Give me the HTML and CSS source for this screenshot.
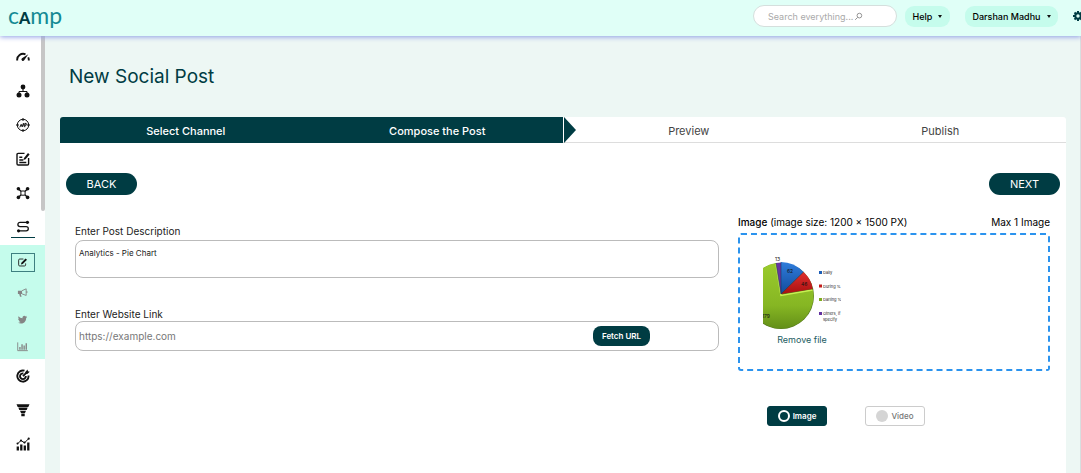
FILE: index.html
```html
<!DOCTYPE html>
<html lang="en">
<head>
<meta charset="utf-8">
<title>New Social Post</title>
<link rel="stylesheet" href="styles.css">
</head>
<body>
<header class="topbar">
  <a class="logo" href="#"><span>c</span><b>A</b><span>mp</span></a>
  <div class="tools">
    <label class="search">
      <input type="text" aria-label="Search" placeholder="Search everything...">
      <svg class="lens" viewBox="0 0 10 10"><circle cx="6" cy="4" r="2.6"/><path d="M4 6 1.3 8.7"/></svg>
    </label>
    <button class="pill help" type="button">Help <i class="caret"></i></button>
    <button class="pill user" type="button">Darshan Madhu <i class="caret"></i></button>
    <button class="gear" type="button" aria-label="Settings"><svg viewBox="0 0 10 10"><circle class="ring" cx="5" cy="5" r="2.7"/><path d="M5 0v2M5 8v2M0 5h2M8 5h2M1.5 1.5l1.4 1.4M7.1 7.1l1.4 1.4M8.5 1.5 7.1 2.9M2.9 7.1 1.5 8.5"/></svg></button>
  </div>
</header>
<div class="shell">
  <nav class="side" aria-label="Main">
    <a class="item" href="#" aria-label="Dashboard"><svg viewBox="0 0 14 14"><path class="thick" d="M1.2 10.5A6 6 0 0 1 9.5 4.3M12.2 7.3a6 6 0 0 1 .6 3.2"/><path class="fill" d="M12.3 4.2 8.2 10.3a1.5 1.5 0 1 1-2.2-2z"/></svg></a>
    <a class="item" href="#" aria-label="Organisation"><svg viewBox="0 0 14 14"><path d="M7 3v5M3 10V7.5h8V10"/><circle class="fill" cx="7" cy="3" r="2.4"/><circle class="fill" cx="3" cy="11" r="2.5"/><circle class="fill" cx="11" cy="11" r="2.5"/></svg></a>
    <a class="item" href="#" aria-label="Audience"><svg viewBox="0 0 14 14"><circle cx="7" cy="7" r="5.7"/><path d="M7 0v3M7 11v3M0 7h3M11 7h3M3.8 9.3l1.4-3 1 2.6 1.2-3.6.8 3.4M8.8 9.2V5.4h1.4v1.8H8.8"/></svg></a>
    <a class="item" href="#" aria-label="Content"><svg viewBox="0 0 14 14"><path class="mid" d="M8.5 1.4H2.2Q1 1.4 1 2.6v9.2Q1 13 2.2 13h9.2q1.2 0 1.2-1.2V6"/><path class="mid" d="M3.3 5.3h3M3.3 8h4M3.3 10.5h7"/><path class="fill" d="m8 6 4-5 1.6 1.4-4 4.8L7.4 8z"/></svg></a>
    <a class="item" href="#" aria-label="Network"><svg viewBox="0 0 14 14"><path class="mid" d="m2.5 3 9 8.3M11.5 3l-9 8.3"/><rect class="hollow" x="4.9" y="5" width="4.2" height="4.2" rx="1"/><circle class="fill" cx="2.4" cy="2.8" r="1.8"/><circle class="fill" cx="11.6" cy="2.8" r="1.8"/><circle class="fill" cx="2.4" cy="11.4" r="1.8"/><circle class="fill" cx="11.6" cy="11.4" r="1.8"/></svg></a>
    <a class="item current" href="#" aria-label="Journeys"><svg viewBox="0 0 14 14"><path class="mid" d="M11.5 2.5H3.8a2.3 2.3 0 0 0 0 4.6h6.6a2.3 2.3 0 0 1 0 4.6H2.5"/><circle class="fill" cx="11.8" cy="2.5" r="1.7"/><circle class="fill" cx="2.2" cy="11.7" r="1.7"/></svg></a>
    <div class="sub">
      <a class="subitem boxed" href="#" aria-label="Compose"><svg viewBox="0 0 12 12"><path d="M7 2.2H3Q1.8 2.2 1.8 3.4v5.2Q1.8 9.8 3 9.8h5.2q1.2 0 1.2-1.2V7"/><path class="fill" d="m4.8 6.2 4.5-4.6 1.6 1.5-4.6 4.6-2 .5z"/></svg></a>
      <a class="subitem" href="#" aria-label="Campaigns"><svg viewBox="0 0 12 12"><path class="fill" d="M1 4h4.5v3.5H4.2l.8 3H3.3l-.9-3H1z"/><path d="M5.500 4 10 2v7.200L5.500 7.500M10.800 4.500v2"/></svg></a>
      <a class="subitem" href="#" aria-label="Twitter"><svg viewBox="0 0 12 12"><path class="fill" d="M11 3.2 10 4.3C10 8.500 6.800 10.500 4.300 10.300 3 10.300 2 10 1.200 9.500c1.200 0 2-.3 2.700-.9-1 0-1.600-.6-1.900-1.400h.8C1.700 6.800 1.300 6 1.300 5.100l.9.200C1.200 4.500 1.200 3.300 1.700 2.400 2.800 3.700 4.200 4.500 6 4.600 5.700 3.100 6.700 2 8 2c.6 0 1.100.3 1.500.6L10.800 2l-.7 1.200z"/></svg></a>
      <a class="subitem" href="#" aria-label="Reports"><svg viewBox="0 0 12 12"><path d="M.8 1.500v9h11"/><path class="bars" d="M3.200 9.500V6.500M5.500 9.500V3.500M7.800 9.500V5M10.100 9.500V2.500"/></svg></a>
    </div>
    <a class="item" href="#" aria-label="Goals"><svg viewBox="0 0 14 14"><path class="thick" d="M8.500 1.700A5.600 5.600 0 1 0 12.500 6.500"/><path class="thick" d="M7.400 4.400a2.900 2.900 0 1 0 2.400 2.600"/><path class="thick" d="m7 7.200 3.500-3.500"/><path class="fill" d="m9.300 3 2.200-2.500.5 1.800 1.800.5-2.500 2.200-2 .1z"/></svg></a>
    <a class="item" href="#" aria-label="Funnel"><svg viewBox="0 0 14 14"><path class="fill" d="M.5 1.200h13L12.300 4H1.700zM2.300 4.600h9.400l-1 2.500H3.300zM4 7.700h6L9 10H5zM5.300 10.600h3.400v2.700H5.300z"/></svg></a>
    <a class="item" href="#" aria-label="Analytics"><svg viewBox="0 0 14 14"><path class="heavy" d="M1.800 13.500V9.500M5.300 13.500V7.500M8.800 13.500V8.500M12.300 13.500V5.500"/><path d="M1.500 6.800 5 3.500l3.500 2.300 4-4"/><circle class="fill" cx="1.500" cy="6.500" r="1"/><circle class="fill" cx="5" cy="3.500" r="1.100"/><circle class="fill" cx="8.500" cy="5.500" r="1.100"/><circle class="fill" cx="12.700" cy="1.700" r="1.100"/></svg></a>
  </nav>
  <main class="main">
    <h1 class="title">New Social Post</h1>
    <ol class="steps">
      <li class="step done">Select Channel</li>
      <li class="step done last">Compose the Post</li>
      <li class="step">Preview</li>
      <li class="step">Publish</li>
    </ol>
    <section class="card">
      <div class="nav-row">
        <button class="round" type="button">BACK</button>
        <button class="round" type="button">NEXT</button>
      </div>
      <form class="form">
        <div class="fields">
          <label class="label" for="desc">Enter Post Description</label>
          <textarea class="desc" id="desc">Analytics - Pie Chart</textarea>
          <label class="label" for="link">Enter Website Link</label>
          <div class="link">
            <input id="link" type="url" placeholder="https://example.com">
            <button class="fetch" type="button">Fetch URL</button>
          </div>
        </div>
        <div class="media">
          <div class="media-head"><span><b>Image</b> (image size: 1200 × 1500 PX)</span><span>Max 1 Image</span></div>
          <div class="drop">
            <figure class="preview">
              <svg class="pie" viewBox="0 0 78 76" role="img" aria-label="Pie chart">
                <defs>
                  <linearGradient id="green" x2="0" y2="1"><stop offset="0" stop-color="#9acb2d"/><stop offset=".65" stop-color="#86b623"/><stop offset="1" stop-color="#638f18"/></linearGradient>
                  <linearGradient id="blue" x2="0" y2="1"><stop offset="0" stop-color="#2f7ddc"/><stop offset="1" stop-color="#124b9c"/></linearGradient>
                  <linearGradient id="red" x2="0" y2="1"><stop offset="0" stop-color="#df3030"/><stop offset="1" stop-color="#a91010"/></linearGradient>
                </defs>
                <circle cx="18" cy="41" r="33" fill="#55771d"/>
                <path fill="url(#green)" d="M18 40 50 35A32.500 33 0 1 1 13 8z"/>
                <path class="shine" d="m13 9 5 31.500L49.500 35"/>
                <path fill="#6736a0" d="M18 39 13 8l5-.5z"/>
                <path fill="url(#blue)" d="M18 39V7q13 0 22.500 10z"/>
                <path fill="url(#red)" d="m18 39 22.500-22Q49 25 49.500 34z"/>
                <path class="edge" d="M18 39V7M18 39l22.500-22M18 39 13 8"/>
                <g class="values"><text x="12" y="6">13</text><text x="24" y="18">62</text><text x="38" y="31">46</text><text x="-1" y="63">179</text></g>
                <g><path fill="#1c5eb8" d="M56 16h3v3h-3z"/><path fill="#c21c1c" d="M56 29.500h3v3h-3z"/><path fill="#7eab20" d="M56 43h3v3h-3z"/><path fill="#6232a0" d="M56 57h3v3h-3z"/></g>
                <g class="legend"><text x="60" y="19">Daily</text><text x="60" y="32.500">During %</text><text x="60" y="46">Darling %</text><text x="60" y="60">Others, if</text><text x="60" y="65.500">specify</text></g>
              </svg>
              <button class="remove" type="button">Remove file</button>
            </figure>
          </div>
          <div class="kinds">
            <label class="kind"><input type="radio" name="kind" checked><span>Image</span></label>
            <label class="kind"><input type="radio" name="kind"><span>Video</span></label>
          </div>
        </div>
      </form>
    </section>
  </main>
</div>
</body>
</html>
```
FILE: styles.css
```css
* { box-sizing: border-box; }
html, body { height: 100%; }
body {
  margin: 0;
  display: flex;
  flex-direction: column;
  overflow: hidden;
  background: #edf7f4;
  color: #222;
  font-family: Inter, "Liberation Sans", sans-serif;
  font-size: 10px;
}
button, input, textarea { font: inherit; margin: 0; border: 0; }
button { padding: 0; cursor: pointer; }
a { text-decoration: none; color: inherit; }

.topbar {
  position: relative;
  z-index: 1;
  flex: none;
  height: 36px;
  display: flex;
  align-items: center;
  justify-content: space-between;
  padding: 0 0 4px 8px;
  background: #e0fff7;
  box-shadow: 0 1px 5px #8f9fe6;
}
.logo { display: flex; align-items: baseline; color: #148a94; font-family: Lato, sans-serif; font-size: 23px; line-height: 28px; }
.logo b { color: #003c43; font-size: 16px; font-weight: 900; }
.tools { display: flex; align-items: center; }
.search {
  width: 144px;
  height: 22px;
  display: flex;
  align-items: center;
  border: 1px solid #d5dfdd;
  border-radius: 11px;
  padding-left: 14px;
  background: #fff;
}
.search input { width: 86px; padding: 0; background: none; outline: 0; font-size: 9px; }
.search input::placeholder { color: #aaa; opacity: 1; }
.lens { width: 9px; height: 9px; fill: none; stroke: #888; }
.pill { height: 21px; display: flex; align-items: center; justify-content: center; gap: 6px; border-radius: 9px; background: #c5fcec; color: #000; font-size: 9px; font-weight: 500; }
.help { width: 45px; margin-left: 8px; }
.user { width: 93px; margin-left: 15px; }
.caret { border: 2px solid transparent; border-top: 3px solid #111; border-bottom: 0; }
.gear { width: 8px; height: 10px; margin-left: 15px; overflow: hidden; background: none; }
.gear svg { display: block; width: 10px; height: 10px; fill: none; stroke: #003c43; stroke-width: 2; }

.shell { flex: 1; min-height: 0; display: flex; }
.side { position: relative; flex: none; width: 45px; padding-top: 4px; background: #fff; }
.side::after { content: ""; position: absolute; top: 0; right: 0; width: 4px; height: 175px; background: #c6c6c6; border-radius: 0 0 2px 2px; }
.item { height: 34px; display: flex; align-items: center; justify-content: center; }
.item svg { width: 14px; height: 14px; }
.side svg { fill: none; stroke: #111; stroke-width: 1; }
.side .fill { fill: #111; stroke: none; }
.side .hollow { fill: #fff; }
.side .mid { stroke-width: 1.4; }
.side .thick { stroke-width: 1.9; }
.side .heavy { stroke-width: 2.3; }
.side .bars { stroke-width: 1.5; }
.current { width: 24px; height: 28px; margin: 0 auto; padding-top: 5px; border-bottom: 1px solid #003c43; }
.current svg { flex: none; height: 13px; }
.sub { height: 114px; margin-top: 7px; padding-top: 8px; background: #c5fcec; }
.subitem { height: 27px; display: flex; align-items: center; justify-content: center; }
.subitem svg { width: 11px; height: 11px; }
.side .subitem svg { stroke: #858585; }
.side .subitem .fill { fill: #858585; }
.sub .boxed { width: 24px; height: 19px; margin: 0 auto 7px; border: 1px solid #3e7f80; }
.side .boxed svg { stroke: #222; }
.side .boxed .fill { fill: #111; }

.main { flex: 1; min-width: 0; display: flex; flex-direction: column; padding: 0 14px 0 15px; border-right: 1px solid #d8dedf; }
.title { margin: 26px 0 25px 9px; color: #003c43; font-size: 19px; font-weight: 400; line-height: 30px; }
.steps { list-style: none; margin: 0; padding: 0; display: grid; grid-template-columns: repeat(4, 1fr); flex: none; height: 26px; border-bottom: 1px solid #ddd; border-radius: 3px 3px 0 0; background: #fff; }
.step { display: flex; align-items: center; justify-content: center; height: 26px; padding-top: 1px; color: #444; font-size: 11px; }
.done { background: #003c43; color: #fff; font-weight: 500; }
.done:first-child { border-radius: 3px 0 0 0; }
.last { position: relative; }
.last::after { content: ""; position: absolute; left: 100%; top: 0; border: 13px solid transparent; border-left: 12px solid #003c43; border-right: 0; margin-left: 1px; }
.card { flex: 1; background: #fff; padding: 30px 6px 0; }
.nav-row { display: flex; justify-content: space-between; }
.round { width: 71px; height: 22px; border-radius: 11px; background: #003c43; color: #fff; font-size: 11px; }
.form { display: grid; grid-template-columns: 644fr 312fr; column-gap: 19px; padding: 19px 10px 0 9px; }
.fields { display: flex; flex-direction: column; padding-top: 10px; }
.label { line-height: 14px; color: #222; }
.desc { display: block; width: 100%; height: 38px; margin: 2px 0 29px; padding: 6px 3px; border: 1px solid #bbb; border-radius: 8px; resize: none; background: #fff; color: #222; font-size: 8px; line-height: 12px; }
.link { display: flex; align-items: center; height: 30px; border: 1px solid #bbb; border-radius: 8px; padding: 0 68px 0 3px; }
.link input { flex: 1; min-width: 0; padding: 0; background: none; outline: 0; }
.link input::placeholder { color: #777; opacity: 1; }
.fetch { width: 57px; height: 20px; border-radius: 8px; background: #003c43; color: #fff; font-size: 8px; font-weight: 600; }
.media-head { display: flex; justify-content: space-between; line-height: 16px; margin-bottom: 3px; color: #000; }
.media-head b { font-weight: 500; }
.drop { height: 138px; padding: 20px 22px; border: 2px dashed #2b93ee; border-radius: 3px; }
.preview { width: 80px; margin: 0; display: flex; flex-direction: column; align-items: center; gap: 2px; }
.pie { width: 78px; height: 76px; }
.shine { fill: none; stroke: #c8f052; stroke-width: 1.5; }
.edge { fill: none; stroke: #173252; stroke-width: .5; }
.values { font-size: 5px; fill: #111; }
.legend { font-size: 4px; fill: #222; }
.remove { background: none; color: #225c62; font-size: 9px; line-height: 14px; }
.kinds { display: flex; gap: 38px; padding: 35px 0 0 29px; }
.kind { width: 60px; height: 20px; display: flex; align-items: center; justify-content: center; gap: 3px; border: 1px solid #ccc; border-radius: 3px; color: #777; font-size: 8px; font-weight: 500; }
.kind input { appearance: none; width: 12px; height: 12px; border-radius: 50%; background: #d5d5d5; }
.kind:has(:checked) { border-color: #003c43; background: #003c43; color: #fff; font-weight: 600; }
.kind input:checked { border: 2px solid #fff; background: #003c43; }
```
